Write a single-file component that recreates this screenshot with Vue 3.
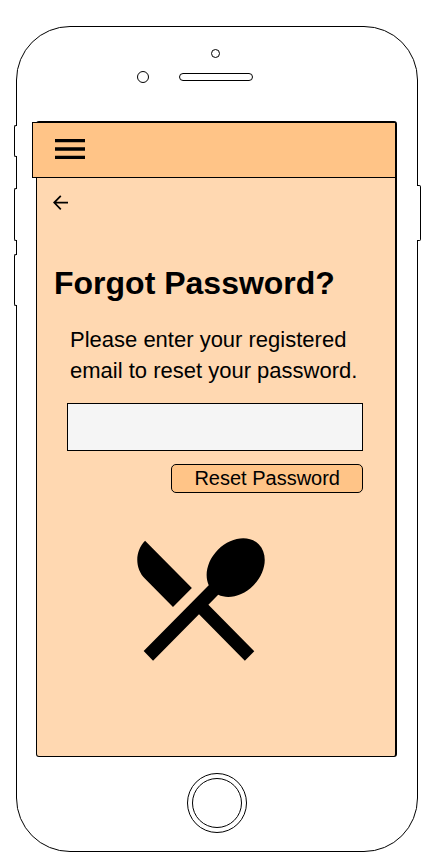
<script setup>
import { ref } from 'vue'

const email = ref('')
</script>

<template>
  <div class="page">
    <div class="phone">
      <span class="side side-mute"></span>
      <span class="side side-up"></span>
      <span class="side side-down"></span>
      <span class="side side-power"></span>

      <div class="earpiece">
        <span class="camera"></span>
        <span class="sensor"></span>
        <span class="speaker"></span>
      </div>

      <div class="screen">
        <header class="bar">
          <button class="icon-button" type="button" aria-label="Menu">
            <svg width="30" height="20" viewBox="0 0 30 20" aria-hidden="true">
              <path d="M0 0h30v3.3H0zM0 8.3h30v3.4H0zM0 16.7h30V20H0z" />
            </svg>
          </button>
        </header>

        <main class="content">
          <a class="back" href="#" aria-label="Back">
            <svg width="16" height="16" viewBox="0 0 16 16" aria-hidden="true">
              <path d="M15 7.6H1.5M7.8 0.8L1.2 7.6L7.8 14.4" fill="none" stroke="#000" stroke-width="1.7" />
            </svg>
          </a>
          <h1 class="title">Forgot Password?</h1>
          <form class="form" @submit.prevent>
            <label class="prompt" for="email">Please enter your registered<br />email to reset your password.</label>
            <input id="email" v-model="email" class="field" type="email" />
            <button class="submit" type="submit">Reset Password</button>
          </form>
          <svg class="logo" width="160" height="162" viewBox="0 0 24 24" preserveAspectRatio="none" aria-hidden="true">
            <path d="M8.1 13.34l2.83-2.83L3.91 3.5c-1.56 1.56-1.56 4.09 0 5.66l4.19 4.18zm6.78-1.81c1.53.71 3.68.21 5.27-1.38 1.91-1.91 2.28-4.65.81-6.12-1.46-1.46-4.2-1.1-6.12.81-1.59 1.59-2.09 3.74-1.38 5.27L3.7 19.87l1.41 1.41L12 14.41l6.88 6.88 1.41-1.41L13.41 13l1.47-1.47z" />
          </svg>
        </main>
      </div>

      <button class="home" type="button" aria-label="Home"><span class="home-ring"></span></button>
    </div>
  </div>
</template>

<style>
body {
  background: #fff;
}
</style>

<style scoped>
* {
  box-sizing: border-box;
}

.page {
  display: flex;
  min-height: 100vh;
  padding: 26px 14px 14px 16px;
  font-family: Helvetica, "Liberation Sans", Arial, sans-serif;
  color: #000;
}

.phone {
  position: relative;
  display: flex;
  flex: 1;
  flex-direction: column;
  min-width: 0;
  padding: 0 20px 18px 19px;
  border: 1px solid #000;
  border-radius: 54px;
  background: #fff;
}

.side {
  position: absolute;
  left: -3px;
  width: 3px;
  border: 1px solid #000;
  border-right: 0;
  border-radius: 2px 0 0 2px;
  background: #fff;
}

.side-mute {
  top: 98px;
  height: 32px;
}

.side-up {
  top: 161px;
  height: 53px;
}

.side-down {
  top: 227px;
  height: 52px;
}

.side-power {
  top: 158px;
  right: -4px;
  left: auto;
  width: 4px;
  height: 56px;
  border: 1px solid #000;
  border-left: 0;
  border-radius: 0 2px 2px 0;
}

.earpiece {
  display: grid;
  grid-template-columns: 1fr auto 1fr;
  column-gap: 30px;
  row-gap: 13px;
  align-items: center;
  padding: 22px 2px 38px 0;
}

.camera,
.sensor,
.speaker {
  border: 1px solid #000;
}

.camera {
  grid-column: 2;
  justify-self: center;
  width: 9px;
  height: 9px;
  border-radius: 50%;
}

.sensor {
  grid-column: 1;
  justify-self: end;
  width: 12px;
  height: 12px;
  border-radius: 50%;
}

.speaker {
  width: 74px;
  height: 8px;
  border-radius: 4px;
}

.screen {
  display: flex;
  flex: 1;
  flex-direction: column;
  border: 1px solid #000;
  border-top-width: 2px;
  border-right-width: 2px;
  border-radius: 3px;
  background: #ffd8b1;
}

.bar {
  display: flex;
  align-items: center;
  height: 56px;
  margin: -1px 0 0 -5px;
  padding: 0 22px 2px;
  border: 1px solid #000;
  border-right: 0;
  background: #ffc487;
}

.icon-button {
  padding: 0;
  border: 0;
  background: none;
}

.icon-button svg,
.back svg,
.logo {
  display: block;
}

.content {
  display: flex;
  flex-direction: column;
  padding: 17px 16px;
}

.back {
  align-self: flex-start;
}

.title {
  margin: 52px 0 0;
  padding-left: 1px;
  font-size: 32px;
  line-height: 40px;
}

.form {
  display: flex;
  flex-direction: column;
  padding: 21px 16px 0 14px;
}

.prompt {
  padding-left: 3px;
  font-size: 22px;
  line-height: 31px;
  white-space: nowrap;
}

.field {
  width: 100%;
  height: 48px;
  margin-top: 17px;
  padding: 0 12px;
  border: 1px solid #000;
  border-radius: 0;
  background: #f5f5f5;
  font: inherit;
  font-size: 20px;
}

.submit {
  align-self: flex-end;
  height: 29px;
  margin-top: 13px;
  padding: 0 22px;
  border: 1px solid #000;
  border-radius: 5px;
  background: #ffc487;
  color: #000;
  font: inherit;
  font-size: 20px;
  line-height: 27px;
}

.logo {
  align-self: center;
  margin: 24px 34px 0 0;
}

.home {
  align-self: center;
  width: 60px;
  height: 60px;
  margin-top: 16px;
  padding: 4px;
  border: 1px solid #000;
  border-radius: 50%;
  background: #fff;
}

.home-ring {
  display: block;
  height: 100%;
  border: 1px solid #000;
  border-radius: 50%;
}
</style>
